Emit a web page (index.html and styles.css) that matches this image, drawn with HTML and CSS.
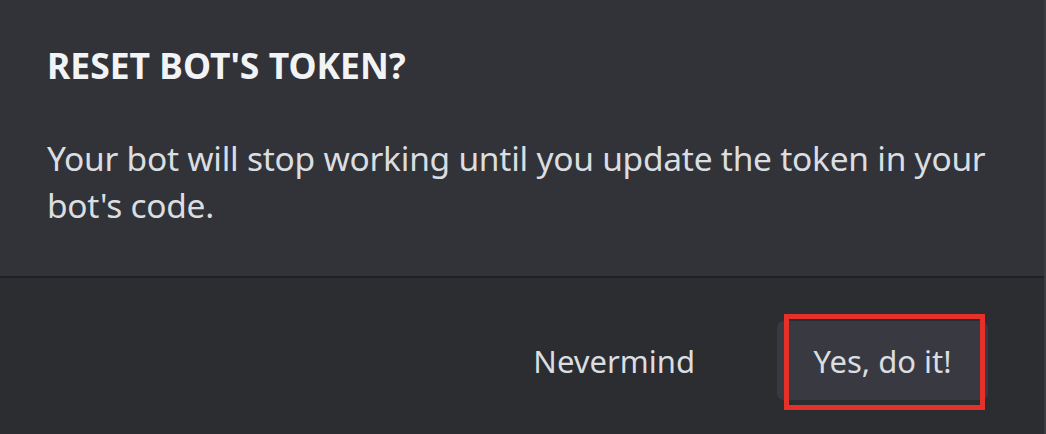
FILE: index.html
```html
<!DOCTYPE html>
<html>
<head>
<meta charset="utf-8">
<link rel="stylesheet" href="styles.css">
</head>
<body>
<div class="modal">
  <div class="content">
    <h2 class="title">RESET BOT'S TOKEN?</h2>
    <p class="body-text">Your bot will stop working until you update the token in your bot's code.</p>
  </div>
  <div class="footer">
    <button class="btn btn-link">Nevermind</button>
    <button class="btn btn-secondary">Yes, do it!<span class="highlight"></span></button>
  </div>
</div>
</body>
</html>
```

FILE: styles.css
```css
html, body {
  margin: 0;
  padding: 0;
  background: #313338;
}
.modal {
  width: 1046px;
  height: 434px;
  display: flex;
  flex-direction: column;
  background: #313338;
  font-family: "Noto Sans", "Open Sans", sans-serif;
  border-radius: 8px 0 0 0;
  overflow: hidden;
  box-sizing: border-box;
  border-right: 2px solid #3a3c41;
}
.content {
  padding: 47px 20px 47px 47px;
  border-bottom: 2px solid #1f2023;
}
.title {
  margin: 0;
  font-size: 35.5px;
  line-height: 36px;
  font-weight: 700;
  color: #f2f3f5;
}
.body-text {
  margin: 52px 0 0 0;
  font-size: 33.5px;
  letter-spacing: -0.25px;
  line-height: 47px;
  color: #dbdee1;
}
.footer {
  flex: 1;
  background: #2b2d31;
  display: flex;
  justify-content: flex-end;
  align-items: flex-start;
  padding: 43px 56px 0 0;
  gap: 46px;
}
.btn {
  position: relative;
  height: 79px;
  padding: 0 36px;
  border: none;
  border-radius: 7px;
  font-family: inherit;
  font-size: 31px;
  white-space: nowrap;
  color: #dbdee1;
  background: transparent;
}
.btn-secondary {
  width: 211px;
  padding: 0;
  background: #393a41;
}
.highlight {
  position: absolute;
  left: 7px;
  top: -7px;
  width: 201px;
  height: 96px;
  box-sizing: border-box;
  border: 5px solid #e6302a;
}
```
